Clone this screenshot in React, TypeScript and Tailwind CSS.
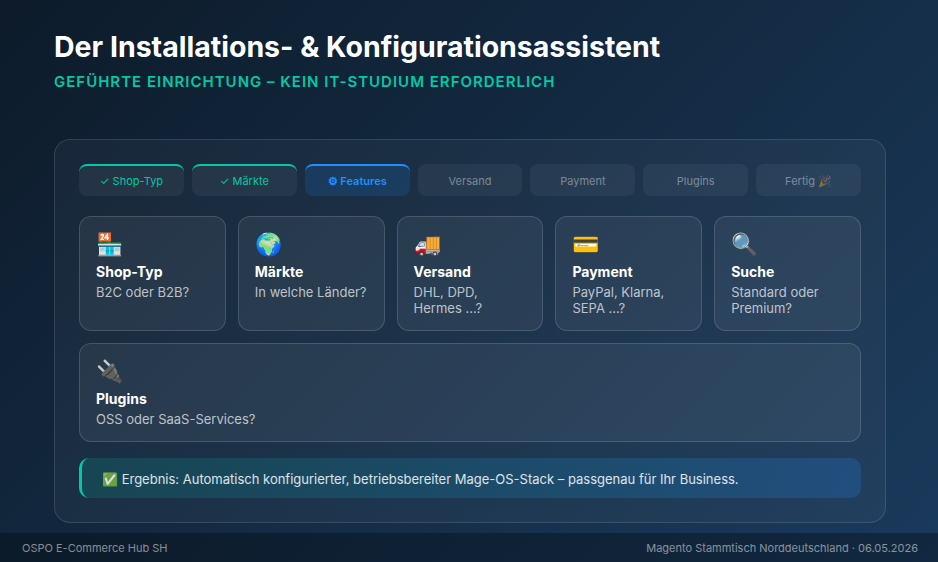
const steps = [
  { label: "✓ Shop-Typ", state: "done" },
  { label: "✓ Märkte", state: "done" },
  { label: "⚙ Features", state: "active" },
  { label: "Versand", state: "todo" },
  { label: "Payment", state: "todo" },
  { label: "Plugins", state: "todo" },
  { label: "Fertig 🎉", state: "todo" },
];

const cards = [
  { icon: "🏪", title: "Shop-Typ", text: "B2C oder B2B?" },
  { icon: "🌍", title: "Märkte", text: "In welche Länder?" },
  { icon: "🚚", title: "Versand", text: "DHL, DPD, Hermes ...?" },
  { icon: "💳", title: "Payment", text: "PayPal, Klarna, SEPA ...?" },
  { icon: "🔍", title: "Suche", text: "Standard oder Premium?" },
];

function stepClass(state: string) {
  if (state === "done") return "border-[#00c9a7] bg-white/[0.05] text-[#00c9a7]";
  if (state === "active") return "border-[#1e90ff] bg-[#1e90ff]/15 font-semibold text-[#1e90ff]";
  return "border-transparent bg-white/[0.05] text-white/40";
}

function Card({ icon, title, text }: { icon: string; title: string; text: string }) {
  return (
    <div className="rounded-xl border border-white/[0.15] bg-white/[0.06] px-4 py-3.5">
      <div className="mb-1 text-[22px] leading-[26px]">{icon}</div>
      <div className="text-sm leading-[21px] font-bold text-white">{title}</div>
      <div className="mt-0.5 text-[13px] leading-4 text-white/70">{text}</div>
    </div>
  );
}

export default function App() {
  return (
    <div className="flex h-[562px] w-[938px] flex-col overflow-hidden bg-[linear-gradient(135deg,#0d1b2a_0%,#1a3a5c_100%)] font-['Inter',sans-serif]">
      <div className="flex-1 pt-[28px] pr-[52px] pl-[54px]">
        <h1 className="text-[28.5px] leading-[38px] font-bold text-white">
          Der Installations- &amp; Konfigurationsassistent
        </h1>
        <p className="mt-[6px] text-[15px] leading-[20px] font-semibold tracking-[1px] text-[#00c9a7] uppercase">
          Geführte Einrichtung – kein IT-Studium erforderlich
        </p>

        <div className="mt-[47px] rounded-2xl border border-white/[0.12] bg-white/[0.04] p-6">
          <div className="grid grid-cols-7 gap-2">
            {steps.map((s) => (
              <div
                key={s.label}
                className={`flex h-8 items-center justify-center rounded-lg border-t-2 text-[11px] ${stepClass(s.state)}`}
              >
                {s.label}
              </div>
            ))}
          </div>

          <div className="mt-5 grid grid-cols-5 gap-3">
            {cards.map((c) => (
              <Card key={c.title} {...c} />
            ))}
            <div className="col-span-5">
              <Card icon="🔌" title="Plugins" text="OSS oder SaaS-Services?" />
            </div>
          </div>

          <div className="mt-4 rounded-[10px] border-l-[3px] border-[#00c9a7] bg-[linear-gradient(90deg,rgba(0,201,167,0.15),rgba(30,144,255,0.2))] px-5 pt-[13px] pb-[11px] text-[13px] leading-4 text-white/85">
            ✅ Ergebnis: Automatisch konfigurierter, betriebsbereiter Mage-OS-Stack – passgenau für Ihr Business.
          </div>
        </div>
      </div>

      <div className="flex h-[29px] items-center justify-between bg-black/30 pt-px pr-5 pl-[22px] text-[11px] text-white/50">
        <span>OSPO E-Commerce Hub SH</span>
        <span>Magento Stammtisch Norddeutschland · 06.05.2026</span>
      </div>
    </div>
  );
}
